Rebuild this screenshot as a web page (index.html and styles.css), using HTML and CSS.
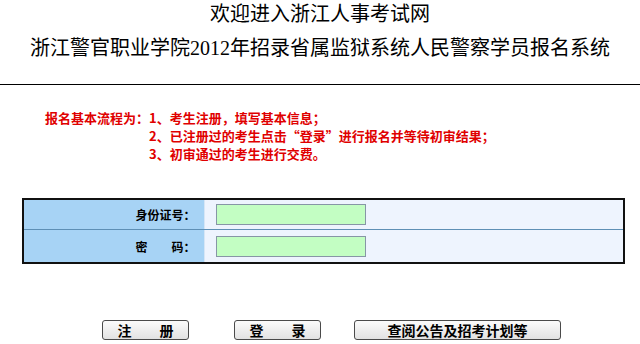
FILE: index.html
```html
<!DOCTYPE html>
<html lang="zh-CN">
<head>
    <meta charset="UTF-8">
    <title>浙江警官职业学院2012年招录省属监狱系统人民警察学员报名系统</title>
    <link rel="stylesheet" href="styles.css">
</head>
<body>
    <div class="header">
        <div class="title-sub">欢迎进入浙江人事考试网</div>
        <div class="title-main">浙江警官职业学院2012年招录省属监狱系统人民警察学员报名系统</div>
    </div>
    <div class="rule"></div>

    <div class="steps">
        <div class="steps-label">报名基本流程为：</div>
        <div class="steps-list">
            <div>1、考生注册，填写基本信息；</div>
            <div>2、已注册过的考生点击“登录”进行报名并等待初审结果；</div>
            <div>3、初审通过的考生进行交费。</div>
        </div>
    </div>

    <table class="login">
        <tr class="row-first">
            <td class="label">身份证号：</td>
            <td class="field"><input type="text" class="input"></td>
        </tr>
        <tr class="row-second">
            <td class="label">密　　码：</td>
            <td class="field"><input type="password" class="input"></td>
        </tr>
    </table>

    <div class="actions">
        <button class="btn btn-short">注　　册</button>
        <button class="btn btn-short btn-login">登　　录</button>
        <button class="btn btn-long">查阅公告及招考计划等</button>
    </div>
</body>
</html>
```

FILE: styles.css
```css
body {
    margin: 0;
    background-color: #fff;
    color: #000;
    font-family: "Liberation Serif", "Noto Sans CJK SC", serif;
}
.header {
    text-align: center;
    font-size: 20px;
}
.title-sub {
    height: 28px;
    line-height: 28px;
}
.title-main {
    margin-top: 6px;
    height: 28px;
    line-height: 28px;
}
.rule {
    margin-top: 22px;
    height: 1px;
    background-color: #000;
}
.steps {
    display: flex;
    margin-top: 24px;
    padding-left: 45px;
    font-family: "Noto Sans CJK SC", sans-serif;
    font-size: 13px;
    font-weight: bold;
    line-height: 18px;
    color: #e00000;
}
.steps-label {
    flex: 0 0 100px;
    white-space: nowrap;
}
.login {
    margin: 35px 0 0 22px;
    width: 603px;
    border-collapse: collapse;
    border: 2px solid #111;
    font-family: "Noto Sans CJK SC", sans-serif;
    font-size: 12px;
    font-weight: bold;
}
.login td {
    padding: 0;
}
.row-first td {
    height: 29px;
    border-bottom: 1px solid #5e8fb5;
}
.row-second td {
    height: 32px;
}
.label {
    width: 181px;
    padding-right: 8px !important;
    text-align: right;
    background-color: #a7d3f5;
    border-right: 1px solid #d6e6f6;
    box-sizing: border-box;
}
.field {
    padding-left: 11px !important;
    background-color: #eef4fe;
}
.input {
    display: block;
    width: 150px;
    height: 21px;
    margin: 0;
    padding: 0;
    box-sizing: border-box;
    background-color: #c3fec3;
    border: 1px solid #8796a6;
}
.actions {
    display: flex;
    margin-top: 56px;
    padding-left: 102px;
}
.btn {
    height: 20px;
    padding: 0;
    font-family: "Noto Sans CJK SC", sans-serif;
    font-size: 14px;
    font-weight: bold;
    line-height: 18px;
    color: #000;
    background: linear-gradient(#fbfbfb, #e2e2e2);
    border: 1px solid #4a4a4a;
    border-radius: 3px;
}
.btn-short {
    width: 87px;
}
.btn-login {
    margin-left: 45px;
}
.btn-long {
    width: 207px;
    margin-left: 33px;
}
```
